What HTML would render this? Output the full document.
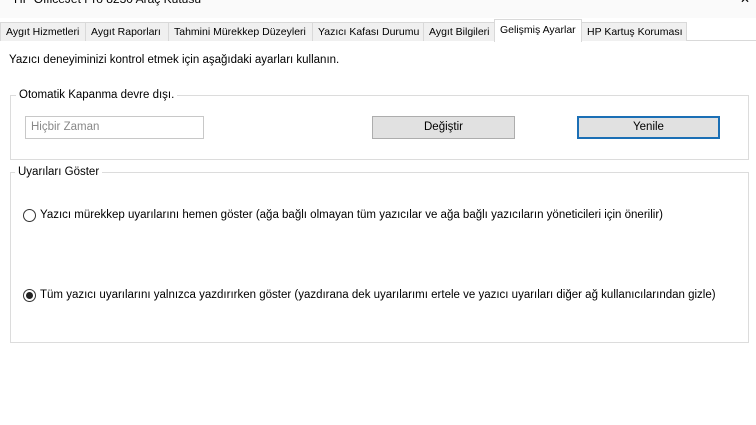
<!DOCTYPE html>
<html><head><meta charset="utf-8"><style>
*{margin:0;padding:0;box-sizing:border-box}
body{width:756px;height:425px;background:#fff;font-family:"Liberation Sans",sans-serif;font-size:11.5px;color:#000;position:relative;overflow:hidden}
.a{position:absolute;white-space:nowrap}
.tabs{position:absolute;left:0;top:22px;height:19px;width:756px;border-bottom:1px solid #d9d9d9}
.tab{position:absolute;top:0;height:19px;background:#f0f0f0;border:1px solid #d9d9d9;border-bottom:none;padding-left:5px;line-height:18px;font-size:10.5px;white-space:nowrap;overflow:hidden}
.sel{background:#fff;top:-3px;height:23px;line-height:20px}
.g{position:absolute;border:1px solid #dcdcdc}
.lbl{position:absolute;background:#fff;padding:0 3px;top:-8px;left:5px;line-height:14px;white-space:nowrap}
.btn{position:absolute;background:#e1e1e1;border:1px solid #adadad;text-align:center;line-height:21px}
.r{position:absolute;width:13px;height:13px;border:1px solid #333;border-radius:50%;background:#fff}
</style></head><body>
<div style="position:absolute;left:0;top:0;width:756px;height:18px;background:#fafafa"></div>
<div class="a" style="left:14px;top:-8px;font-size:12px;color:#000">HP OfficeJet Pro 8230 Araç Kutusu</div>
<div class="a" style="left:0;top:-6px;width:6px;height:6px;background:#e8a030"></div>
<div class="a" style="left:740px;top:-8px;font-size:12px">✕</div>
<div class="tabs">
<div class="tab" style="left:0;width:86px">Aygıt Hizmetleri</div>
<div class="tab" style="left:85px;width:84px">Aygıt Raporları</div>
<div class="tab" style="left:168px;width:145px">Tahmini Mürekkep Düzeyleri</div>
<div class="tab" style="left:312px;width:112px">Yazıcı Kafası Durumu</div>
<div class="tab" style="left:423px;width:72px">Aygıt Bilgileri</div>
<div class="tab sel" style="left:494px;width:88px">Gelişmiş Ayarlar</div>
<div class="tab" style="left:581px;width:106px">HP Kartuş Koruması</div>
</div>
<div class="a" style="left:9px;top:54px">Yazıcı deneyiminizi kontrol etmek için aşağıdaki ayarları kullanın.</div>
<div class="g" style="left:10px;top:95px;width:739px;height:65px"><div class="lbl">Otomatik Kapanma devre dışı.</div></div>
<div class="a" style="left:25px;top:116px;width:179px;height:23px;border:1px solid #c8c8c8;color:#888;padding-left:5px;line-height:21px">Hiçbir Zaman</div>
<div class="btn" style="left:372px;top:116px;width:143px;height:23px">Değiştir</div>
<div class="btn" style="left:577px;top:116px;width:143px;height:23px;border:2px solid #1b6fb5;line-height:19px">Yenile</div>
<div class="g" style="left:10px;top:172px;width:739px;height:171px"><div class="lbl" style="left:4px">Uyarıları Göster</div></div>
<div class="r" style="left:23px;top:209px"></div>
<div class="a" style="left:40px;top:209px">Yazıcı mürekkep uyarılarını hemen göster (ağa bağlı olmayan tüm yazıcılar ve ağa bağlı yazıcıların yöneticileri için önerilir)</div>
<div class="r" style="left:23px;top:289px"><div style="position:absolute;left:2px;top:2px;width:7px;height:7px;border-radius:50%;background:#222"></div></div>
<div class="a" style="left:40px;top:289px">Tüm yazıcı uyarılarını yalnızca yazdırırken göster (yazdırana dek uyarılarımı ertele ve yazıcı uyarıları diğer ağ kullanıcılarından gizle)</div>
</body></html>
